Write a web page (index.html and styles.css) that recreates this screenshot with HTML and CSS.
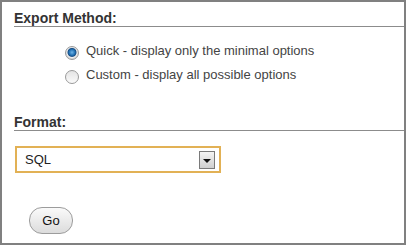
FILE: index.html
```html
<!DOCTYPE html>
<html lang="en">
<head>
    <meta charset="UTF-8">
    <title>Export</title>
    <link rel="stylesheet" href="styles.css">
</head>
<body>
    <div class="frame">
        <div class="section">
            <h2>Export Method:</h2>
            <ul class="options">
                <li><span class="radio checked"></span>Quick - display only the minimal options</li>
                <li><span class="radio"></span>Custom - display all possible options</li>
            </ul>
        </div>
        <div class="section">
            <h2>Format:</h2>
            <div class="select">
                <span>SQL</span>
                <span class="arrow"></span>
            </div>
        </div>
        <div class="actions">
            <button class="go">Go</button>
        </div>
    </div>
</body>
</html>
```

FILE: styles.css
```css
body {
    margin: 0;
    font-family: "Liberation Sans", Arial, sans-serif;
    color: #333;
    background-color: #fff;
}
.frame {
    width: 406px;
    height: 245px;
    box-sizing: border-box;
    border: 2px solid #808080;
    padding: 9px 0 0 12px;
}
.section h2 {
    margin: 0;
    font-size: 14px;
    line-height: 15px;
    font-weight: bold;
    color: #333;
    padding-bottom: 0;
    border-bottom: 1px solid #8c8c8c;
}
.options {
    list-style: none;
    margin: 0;
    padding: 12px 0 0 52px;
}
.options li {
    display: flex;
    align-items: center;
    font-size: 13px;
    line-height: 24px;
    color: #444;
}
.radio {
    width: 12px;
    height: 12px;
    border-radius: 50%;
    border: 1px solid #9a9a9a;
    background: linear-gradient(#e4e4e4, #fafafa);
    margin-right: 7px;
    margin-left: -1px;
    margin-top: 3px;
    box-sizing: content-box;
}
.radio.checked {
    background: radial-gradient(circle at 50% 45%, #6fb4e8 0, #1f6fb2 3px, #1a4f85 4px, #f2f2f2 5px, #d8d8d8 6px);
}
.section + .section {
    margin-top: 28px;
}
.select {
    margin: 15px 0 0 1px;
    width: 206px;
    height: 27px;
    box-sizing: border-box;
    border: 2px solid #e2b155;
    display: flex;
    align-items: center;
    justify-content: space-between;
    padding: 0 4px 0 8px;
    font-size: 13px;
    color: #222;
}
.arrow {
    width: 16px;
    height: 18px;
    box-sizing: border-box;
    border: 1px solid #7a7a7a;
    background: linear-gradient(#f4f4f4, #cfcfcf);
    position: relative;
}
.arrow::after {
    content: "";
    position: absolute;
    left: 3px;
    top: 7px;
    border-left: 4px solid transparent;
    border-right: 4px solid transparent;
    border-top: 4px solid #111;
}
.actions {
    padding: 34px 0 0 15px;
}
.go {
    width: 44px;
    height: 27px;
    border: 1px solid #9c9c9c;
    border-radius: 13px;
    background: linear-gradient(#fafafa, #dcdcdc);
    font-family: "Liberation Sans", Arial, sans-serif;
    font-size: 13px;
    color: #111;
    padding: 0;
}
```
